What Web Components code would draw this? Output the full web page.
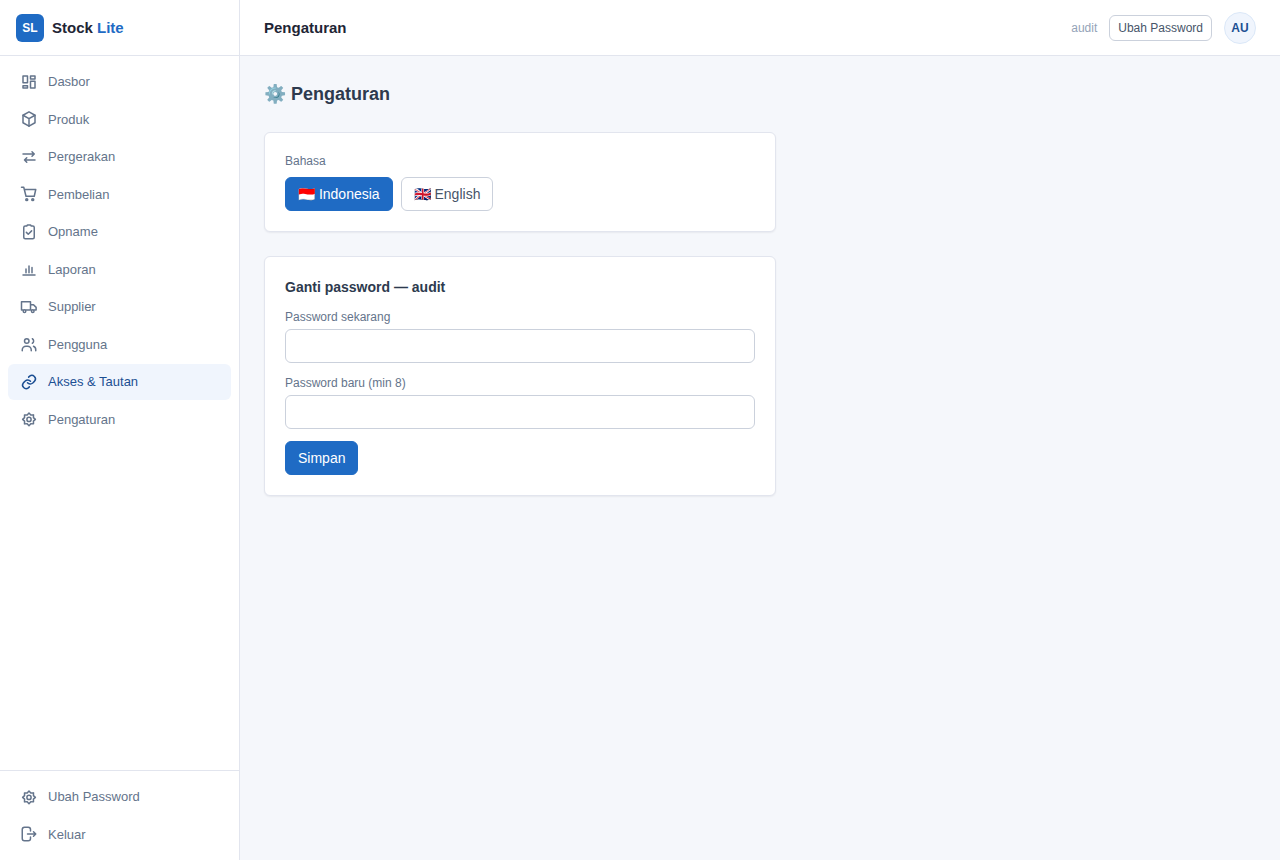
<!DOCTYPE html>
<html lang="id">
<head>
<meta charset="utf-8">
<meta name="viewport" content="width=device-width, initial-scale=1">
<title>Stock Lite - Pengaturan</title>
<style>
:root {
    --primary: #1f6bc4;
    --primary-dark: #1c4f93;
    --primary-soft: #f0f5fd;
    --ink: #1e2535;
    --heading: #2d3a4e;
    --text: #475569;
    --muted: #64748b;
    --faint: #94a3b8;
    --line: #e2e5ee;
    --field-line: #cbd1dc;
    --page: #f5f7fb;
}

body {
    margin: 0;
    background: var(--page);
    color: var(--heading);
    font-family: "Liberation Sans", Arial, sans-serif;
    font-size: 14px;
    line-height: 1.5;
}
</style>
</head>
<body>
<stock-app>
    <side-bar slot="sidebar">
        <nav-item icon="dashboard">Dasbor</nav-item>
        <nav-item icon="box">Produk</nav-item>
        <nav-item icon="swap">Pergerakan</nav-item>
        <nav-item icon="cart">Pembelian</nav-item>
        <nav-item icon="clipboard">Opname</nav-item>
        <nav-item icon="chart">Laporan</nav-item>
        <nav-item icon="truck">Supplier</nav-item>
        <nav-item icon="users">Pengguna</nav-item>
        <nav-item icon="link" active>Akses &amp; Tautan</nav-item>
        <nav-item icon="gear">Pengaturan</nav-item>
        <nav-item slot="footer" icon="gear">Ubah Password</nav-item>
        <nav-item slot="footer" icon="logout">Keluar</nav-item>
    </side-bar>
    <top-bar slot="header" user="audit" initials="AU">Pengaturan</top-bar>
    <page-title>⚙️ Pengaturan</page-title>
    <setting-card><language-picker></language-picker></setting-card>
    <setting-card><password-form user="audit"></password-form></setting-card>
</stock-app>

<script>
const icons = {
    dashboard: '<rect x="4" y="4" width="6" height="9"/><rect x="14" y="4" width="6" height="4"/><rect x="14" y="11" width="6" height="9"/><rect x="4" y="17" width="6" height="3"/>',
    box: '<path d="M12 2.500l8 4.500v10L12 21.500 4 17V7z"/><path d="M4 7l8 4.500L20 7M12 11.500v10"/>',
    swap: '<path d="M4 8h15M16 5l3 3-3 3M20 16H6M9 13l-3 3 3 3"/>',
    cart: '<path d="M2 3h3l3 12h11l2-9H6"/><circle cx="9" cy="19.500" r="1.300"/><circle cx="17" cy="19.500" r="1.300"/>',
    clipboard: '<path d="M9 4H7a2 2 0 0 0-2 2v13a2 2 0 0 0 2 2h10a2 2 0 0 0 2-2V6a2 2 0 0 0-2-2h-2l-1-1.500h-4z"/><path d="M8.500 12.500l2.500 2.500 4.500-4.500"/>',
    chart: '<path d="M4 20h16M8 17v-5M12 17V8M16 17v-7"/>',
    truck: '<path d="M4 16H2V5h12v11H8M14 9h4l3.500 3.500V16H19M14 16h1"/><circle cx="6" cy="17.500" r="1.700"/><circle cx="17" cy="17.500" r="1.700"/>',
    users: '<circle cx="9" cy="8" r="3"/><path d="M3 21v-1a5 5 0 0 1 5-5h2a5 5 0 0 1 5 5v1M16.500 5a3.500 3.500 0 0 1 0 6M18 15a5 5 0 0 1 3 5v1"/>',
    link: '<path d="M10 13a5 5 0 0 0 7 .300l2.500-2.500a4.700 4.700 0 0 0-6.600-6.600L11.500 5.500"/><path d="M14 11a5 5 0 0 0-7-.300l-2.500 2.500a4.700 4.700 0 0 0 6.600 6.600l1.400-1.300"/>',
    gear: '<path d="M12 4l2.400 2.600 3.600-.1-.1 3.600 2.600 2.400-2.600 2.400.1 3.600-3.600-.1L12 21l-2.400-2.600-3.600.1.1-3.600-2.600-2.400 2.600-2.400L6 6.500l3.600.1z"/><circle cx="12" cy="12.500" r="2.800"/>',
    logout: '<path d="M14 8V6a3 3 0 0 0-3-3H6a3 3 0 0 0-3 3v12a3 3 0 0 0 3 3h5a3 3 0 0 0 3-3v-2M10 12h11M18 9l3 3-3 3"/>'
}

// shared look of the buttons in the cards and in the top bar
const buttonStyle = `
button {
    padding: 6px 12px;
    border: 1px solid var(--field-line);
    border-radius: 6px;
    background: #fff;
    color: var(--text);
    font: inherit;
    font-size: 14px;
    line-height: 20px;
    cursor: pointer;
}

button.primary {
    border-color: var(--primary);
    background: var(--primary);
    color: #fff;
}
`

class StockApp extends HTMLElement {
    constructor() {
        super()
        this.attachShadow({ mode: 'open' }).innerHTML = `
<style>
:host {
    display: grid;
    grid-template-columns: 240px 1fr;
    min-height: 100vh;
}

.column {
    min-width: 0;
}

main {
    display: flex;
    flex-direction: column;
    gap: 24px;
    padding: 24px;
}
</style>
<slot name="sidebar"></slot>
<div class="column">
    <slot name="header"></slot>
    <main><slot></slot></main>
</div>`
    }
}

class SideBar extends HTMLElement {
    constructor() {
        super()
        this.attachShadow({ mode: 'open' }).innerHTML = `
<style>
:host {
    display: flex;
    flex-direction: column;
    border-right: 1px solid var(--line);
    background: #fff;
}

.brand {
    display: flex;
    align-items: center;
    gap: 8px;
    height: 55px;
    padding: 0 16px;
    border-bottom: 1px solid var(--line);
    color: var(--ink);
    font-size: 15px;
    font-weight: bold;
    line-height: 24px;
}

.brand b {
    color: var(--primary);
}

.logo {
    display: grid;
    place-items: center;
    width: 28px;
    height: 28px;
    border-radius: 6px;
    background: var(--primary);
    color: #fff;
    font-size: 12px;
    line-height: 18px;
}

nav, footer {
    display: flex;
    flex-direction: column;
    gap: 2px;
    padding: 8px;
}

nav {
    flex: 1;
}

footer {
    border-top: 1px solid var(--line);
}
</style>
<div class="brand">
    <span class="logo">SL</span>
    <span>Stock <b>Lite</b></span>
</div>
<nav><slot></slot></nav>
<footer><slot name="footer"></slot></footer>`
    }
}

class NavItem extends HTMLElement {
    constructor() {
        super()
        this.attachShadow({ mode: 'open' }).innerHTML = `
<style>
:host {
    display: block;
    font-size: 13px;
}

a {
    display: flex;
    align-items: center;
    gap: 10px;
    padding: 8px 12px;
    border-radius: 6px;
    color: var(--muted);
    text-decoration: none;
}

:host([active]) a {
    background: var(--primary-soft);
    color: var(--primary-dark);
}

svg {
    width: 18px;
    height: 18px;
    fill: none;
    stroke: currentColor;
    stroke-width: 2;
    stroke-linecap: round;
    stroke-linejoin: round;
}
</style>
<a href="#">
    <svg viewBox="0 0 24 24" aria-hidden="true">${icons[this.getAttribute('icon')]}</svg>
    <slot></slot>
</a>`
    }
}

class TopBar extends HTMLElement {
    constructor() {
        super()
        this.attachShadow({ mode: 'open' }).innerHTML = `
<style>
${buttonStyle}
:host {
    display: flex;
    align-items: center;
    gap: 12px;
    height: 55px;
    padding: 0 24px;
    border-bottom: 1px solid var(--line);
    background: #fff;
    font-size: 12px;
}

h1 {
    flex: 1;
    margin: 0;
    color: var(--ink);
    font-size: 15px;
    line-height: 24px;
}

.user {
    color: var(--faint);
}

button {
    padding: 3px 8px;
    font-size: 12px;
    line-height: 18px;
}

.avatar {
    display: grid;
    place-items: center;
    box-sizing: border-box;
    width: 32px;
    height: 32px;
    border: 1px solid #dbe8f8;
    border-radius: 50%;
    background: var(--primary-soft);
    color: var(--primary-dark);
    font-weight: bold;
}
</style>
<h1><slot></slot></h1>
<span class="user">${this.getAttribute('user')}</span>
<button type="button">Ubah Password</button>
<span class="avatar">${this.getAttribute('initials')}</span>`
    }
}

class PageTitle extends HTMLElement {
    constructor() {
        super()
        this.attachShadow({ mode: 'open' }).innerHTML = `
<style>
:host {
    display: block;
}

h2 {
    margin: 0;
    font-size: 18px;
    line-height: 28px;
}
</style>
<h2><slot></slot></h2>`
    }
}

class SettingCard extends HTMLElement {
    constructor() {
        super()
        this.attachShadow({ mode: 'open' }).innerHTML = `
<style>
:host {
    display: block;
    box-sizing: border-box;
    width: 100%;
    max-width: 512px;
    padding: 20px;
    border: 1px solid var(--line);
    border-radius: 6px;
    background: #fff;
    box-shadow: 0 1px 2px rgba(15, 23, 42, 0.06);
}
</style>
<slot></slot>`
    }
}

class LanguagePicker extends HTMLElement {
    constructor() {
        super()
        this.attachShadow({ mode: 'open' }).innerHTML = `
<style>
${buttonStyle}
:host {
    display: block;
}

.label {
    margin-bottom: 8px;
    color: var(--muted);
    font-size: 12px;
    line-height: 16px;
}

.options {
    display: flex;
    gap: 8px;
}
</style>
<div class="label" id="label">Bahasa</div>
<div class="options" role="group" aria-labelledby="label">
    <button type="button" class="primary">🇮🇩 Indonesia</button>
    <button type="button">🇬🇧 English</button>
</div>`

        const buttons = this.shadowRoot.querySelectorAll('button')
        buttons.forEach(button => button.addEventListener('click', () => {
            buttons.forEach(b => b.classList.toggle('primary', b === button))
        }))
    }
}

class PasswordForm extends HTMLElement {
    constructor() {
        super()
        this.attachShadow({ mode: 'open' }).innerHTML = `
<style>
${buttonStyle}
:host {
    display: block;
}

form {
    display: flex;
    flex-direction: column;
    align-items: flex-start;
    gap: 12px;
}

h3 {
    margin: 0;
    font-size: 14px;
    line-height: 20px;
}

.field {
    display: flex;
    flex-direction: column;
    gap: 4px;
    width: 100%;
}

label {
    color: var(--muted);
    font-size: 12px;
    line-height: 16px;
}

input {
    padding: 6px 12px;
    border: 1px solid var(--field-line);
    border-radius: 6px;
    background: #fff;
    color: var(--heading);
    font: inherit;
    line-height: 20px;
    height: 20px;
}
</style>
<form>
    <h3>Ganti password — ${this.getAttribute('user')}</h3>
    <div class="field">
        <label for="current">Password sekarang</label>
        <input type="password" id="current" autocomplete="current-password">
    </div>
    <div class="field">
        <label for="next">Password baru (min 8)</label>
        <input type="password" id="next" minlength="8" autocomplete="new-password">
    </div>
    <button type="submit" class="primary">Simpan</button>
</form>`
        this.shadowRoot.querySelector('form').addEventListener('submit', e => e.preventDefault())
    }
}

customElements.define('stock-app', StockApp)
customElements.define('side-bar', SideBar)
customElements.define('nav-item', NavItem)
customElements.define('top-bar', TopBar)
customElements.define('page-title', PageTitle)
customElements.define('setting-card', SettingCard)
customElements.define('language-picker', LanguagePicker)
customElements.define('password-form', PasswordForm)
</script>
</body>
</html>
